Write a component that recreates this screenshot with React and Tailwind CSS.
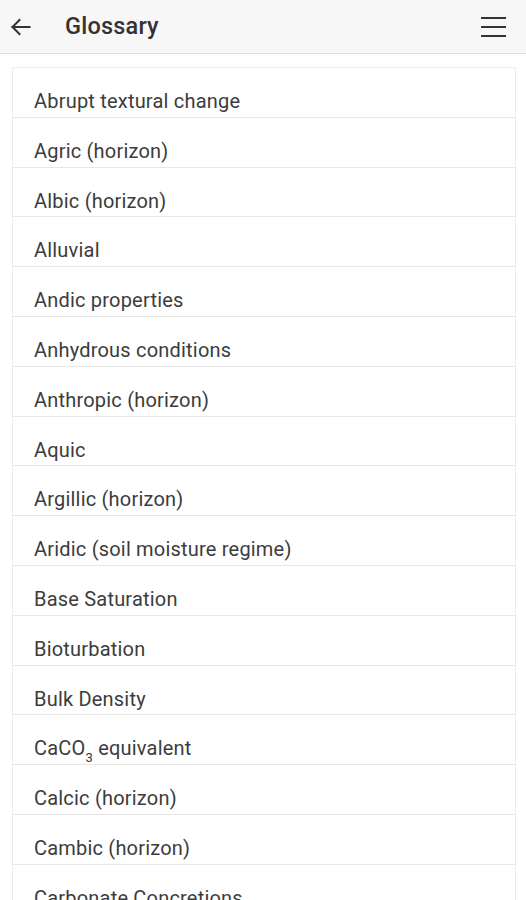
import React from "react";

const items = [
  "Abrupt textural change",
  "Agric (horizon)",
  "Albic (horizon)",
  "Alluvial",
  "Andic properties",
  "Anhydrous conditions",
  "Anthropic (horizon)",
  "Aquic",
  "Argillic (horizon)",
  "Aridic (soil moisture regime)",
  "Base Saturation",
  "Bioturbation",
  "Bulk Density",
  "CACO3",
  "Calcic (horizon)",
  "Cambic (horizon)",
  "Carbonate Concretions",
  "Cation Exchange Capacity",
];

export default function App() {
  return (
    <div className="w-[526px] h-[900px] overflow-hidden bg-white text-[#3c3c3c]" style={{ fontFamily: "Roboto, 'Liberation Sans', sans-serif" }}>
      <header className="h-[54px] bg-[#f7f7f7] border-b border-[#dedede] flex items-center">
        <div className="w-[42px] pl-[8px] flex items-center">
          <svg width="25" height="24" viewBox="0 0 24 24" fill="none" stroke="#333" strokeWidth="2" strokeLinecap="square">
            <path d="M21 12H4" />
            <path d="M11 5l-7 7 7 7" />
          </svg>
        </div>
        <h1 className="ml-[23px] text-[23.5px] font-medium leading-none tracking-[0.2px] text-[#333]">Glossary</h1>
        <div className="ml-auto mr-[20px] flex flex-col gap-[7px]">
          <span className="block w-[25px] h-[2px] bg-[#333]" />
          <span className="block w-[25px] h-[2px] bg-[#333]" />
          <span className="block w-[25px] h-[2px] bg-[#333]" />
        </div>
      </header>
      <div className="pt-[13px] px-[12px]">
        <ul className="border-l border-r border-t border-[#ececec] w-[504px]">
          {items.map((t) => (
            <li key={t} className="h-[49.8px] border-b border-[#e6e6e6] pl-[21px] pt-[21px] text-[20px] leading-[24px] tracking-[0.2px]">
              {t === "CACO3" ? (
                <span>
                  CaCO<sub className="text-[13px] align-[-3px] leading-none">3</sub> equivalent
                </span>
              ) : (
                t
              )}
            </li>
          ))}
        </ul>
      </div>
    </div>
  );
}
